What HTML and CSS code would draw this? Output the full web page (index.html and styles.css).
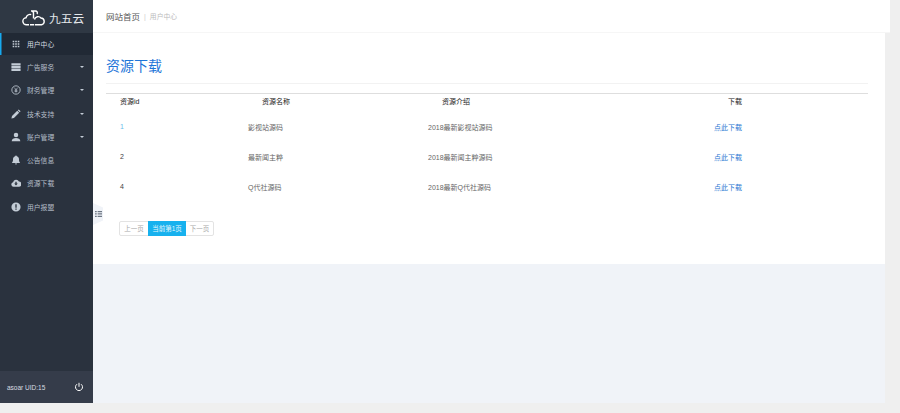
FILE: index.html
```html
<!DOCTYPE html>
<html lang="zh-CN">
<head>
<meta charset="utf-8">
<title>资源下载</title>
<link rel="stylesheet" href="styles.css">
</head>
<body>
<div class="shell">
  <aside class="sidebar">
    <div class="brand">
      <svg class="logo" viewBox="0 0 24 16" width="24" height="16"><path d="M7 14.700H4.600a3.500 3.500 0 0 1-.5-7A4 4 0 0 1 9.200 4.600M9 1h4.300a1.900 1.900 0 0 1 1.700 3M10.200 1l1.300 1.500V8.500M12 14.700H8M12.500 9.500a3.700 3.700 0 0 1 6.500-1.500 3.400 3.400 0 0 1 .6 6.700h-6.800" fill="none" stroke="#fff" stroke-width="1.400"/></svg>
      <span class="brand-name">九五云</span>
    </div>
    <nav class="menu">
      <a class="item active"><svg class="ic" viewBox="-1.500 -1.500 15 15"><path d="M1 1h2.400v2.400H1zM4.800 1h2.400v2.400H4.800zM8.600 1H11v2.400H8.600zM1 4.800h2.400v2.400H1zM4.800 4.800h2.400v2.400H4.800zM8.600 4.800H11v2.400H8.600zM1 8.600h2.400V11H1zM4.800 8.600h2.400V11H4.800zM8.600 8.600H11V11H8.600z"/></svg><span>用户中心</span></a>
      <a class="item"><svg class="ic" viewBox="0 0 12 12"><path d="M.500 1.500h11v2.700H.500zM.500 4.800h11v2.700H.500zM.500 8.100h11v2.700H.500z"/></svg><span>广告服务</span><i class="caret"></i></a>
      <a class="item"><svg class="ic" viewBox="0 0 12 12"><circle cx="6" cy="6" r="5" fill="none" stroke="#c3ccd6" stroke-width="1"/><path d="M4.200 3.200 6 6l1.800-2.800M4.300 6.300h3.400M4.300 7.700h3.400M6 6v3" fill="none" stroke="#c3ccd6" stroke-width=".8"/></svg><span>财务管理</span><i class="caret"></i></a>
      <a class="item"><svg class="ic" viewBox="0 0 12 12"><path d="M.500 11.500l.7-3 6.300-6.300 2.300 2.300-6.300 6.300zM8.200 1.500l1-1 2.300 2.300-1 1z"/></svg><span>技术支持</span><i class="caret"></i></a>
      <a class="item"><svg class="ic" viewBox="0 0 12 12"><circle cx="6" cy="3.600" r="2.700"/><path d="M.800 11c0-2.800 2.600-3.900 5.200-3.900s5.200 1.100 5.200 3.900z"/></svg><span>账户管理</span><i class="caret"></i></a>
      <a class="item"><svg class="ic" viewBox="0 0 12 12"><path d="M6 .5a1 1 0 0 1 1 1c1.800.5 2.600 2 2.600 3.800 0 2 .5 3.200 1.400 4.200H1c.9-1 1.400-2.200 1.400-4.200C2.400 3.500 3.200 2 5 1.500a1 1 0 0 1 1-1zM4.800 10.200h2.400a1.200 1.200 0 0 1-2.400 0z"/></svg><span>公告信息</span></a>
      <a class="item"><svg class="ic" viewBox="0 0 12 12"><path fill-rule="evenodd" d="M3 10.500a2.800 2.800 0 0 1-.5-5.500A3.700 3.700 0 0 1 9.500 4.300a3.100 3.100 0 0 1-.2 6.200zM6 9l2.200-2.500H6.800V4.500H5.200v2H3.800z"/></svg><span>资源下载</span></a>
      <a class="item"><svg class="ic" viewBox="0 0 12 12"><path fill-rule="evenodd" d="M6 .5a5.500 5.500 0 1 1 0 11A5.500 5.500 0 0 1 6 .5zM5.200 2.800v4.200h1.600V2.800zM5.200 7.800v1.500h1.600V7.800z"/></svg><span>用户报盟</span></a>
    </nav>
    <div class="foot">
      <span class="uid">asoar UID:15</span>
      <svg class="power" viewBox="0 0 10 10" width="10" height="10"><path d="M3 2.200a3.500 3.500 0 1 0 4 0M5 .8v4" fill="none" stroke="#fff" stroke-width="1"/></svg>
    </div>
  </aside>
  <div class="main">
    <header class="topbar">
      <a class="crumb-home">网站首页</a>
      <span class="crumb-sep">|</span>
      <span class="crumb-cur">用户中心</span>
    </header>
    <section class="panel">
      <h1 class="title">资源下载</h1>
      <table class="grid">
        <colgroup><col class="c1"><col class="c2"><col class="c3"><col class="c4"></colgroup>
        <thead>
          <tr><th class="first">资源id</th><th>资源名称</th><th>资源介绍</th><th>下载</th></tr>
        </thead>
        <tbody>
          <tr><td class="first link-light">1</td><td>影视站源码</td><td>2018最新影视站源码</td><td><a class="dl">点此下载</a></td></tr>
          <tr><td class="first">2</td><td>最新闻主粹</td><td>2018最新闻主粹源码</td><td><a class="dl">点此下载</a></td></tr>
          <tr><td class="first">4</td><td>Q代社源码</td><td>2018最新Q代社源码</td><td><a class="dl">点此下载</a></td></tr>
        </tbody>
      </table>
      <div class="pager">
        <span class="pg prev">上一页</span><span class="pg cur">当前第1页</span><span class="pg next">下一页</span>
      </div>
      <div class="toggle"><svg viewBox="0 0 8 8" width="7" height="8"><path d="M0 .5h2v1.500H0zM3 .5h5v1.500H3zM0 3.200h2v1.500H0zM3 3.200h5v1.500H3zM0 6h2v1.500H0zM3 6h5v1.500H3z" fill="#6d7784"/></svg></div>
    </section>
  </div>
</div>
</body>
</html>
```
FILE: styles.css
```css
* { box-sizing: border-box; }
html, body { margin: 0; padding: 0; }
body {
  background: #efefef;
  font-family: "Liberation Sans", "Noto Sans CJK SC", sans-serif;
  font-size: 7px;
  color: #333;
  height: 413px;
  overflow: hidden;
}
.shell { display: flex; width: 885px; height: 403px; }
.sidebar {
  width: 93px;
  flex: none;
  display: flex;
  flex-direction: column;
  background: #2a323e;
}
.brand {
  height: 33px;
  background: #2f3844;
  display: flex;
  align-items: center;
  padding: 3px 0 0 22px;
  gap: 3px;
}
.brand-name { color: #e6e9ec; font-size: 11.700px; line-height: 1; padding-top: 2px; }
.menu { flex: 1; display: flex; flex-direction: column; }
.item {
  height: 23.300px;
  display: flex;
  align-items: center;
  color: #b4bdc8;
  padding: 0 9px 0 11px;
  font-size: 6.800px;
}
.item.active {
  height: 22.300px;
  background: #212935;
  box-shadow: inset 1.500px 0 0 #17a9ef;
  color: #d6dde3;
}
.ic { width: 10px; height: 10px; fill: #c3ccd6; margin-right: 6px; flex: none; }
.item span { flex: 1; }
.caret {
  width: 0; height: 0;
  border-left: 2px solid transparent;
  border-right: 2px solid transparent;
  border-top: 2px solid #c3ccd6;
}
.foot {
  height: 32px;
  background: #353c4a;
  display: flex;
  align-items: center;
  justify-content: space-between;
  padding: 0 9px 0 7px;
  color: #d9dde2;
  font-size: 6.500px;
}
.main { flex: 1; display: flex; flex-direction: column; min-width: 0; background: #f0f3f8; }
.topbar {
  height: 33px;
  width: 797px;
  flex: none;
  background: #fff;
  border-bottom: 1px solid #f6f6f6;
  display: flex;
  align-items: center;
  padding-left: 13px;
  gap: 4px;
}
.crumb-home { font-size: 8.500px; color: #555; }
.crumb-sep { color: #ccc; font-size: 7px; }
.crumb-cur { color: #bbb; font-size: 6.800px; }
.panel {
  position: relative;
  height: 231px;
  background: #fff;
  padding: 0 17px 0 13px;
}
.title {
  margin: 0;
  padding: 24px 0 13px;
  height: 51px;
  font-size: 14px;
  line-height: 18px;
  font-weight: 400;
  color: #1e75d8;
  border-bottom: 1px solid #f2f2f2;
}
.grid {
  width: 762px;
  margin-top: 9px;
  border-collapse: collapse;
  table-layout: fixed;
  border-top: 1px solid #dedede;
}
.c1 { width: 141px; }
.c2 { width: 180px; }
.c3 { width: 286px; }
.c4 { width: 155px; }
.grid th {
  height: 18px;
  padding: 0 0 4px 15px;
  font-weight: 400;
  text-align: left;
  font-size: 7px;
  color: #222;
}
.grid td {
  height: 30px;
  padding: 0 0 0 1px;
  font-size: 7px;
  color: #666;
}
.grid th.first, .grid td.first { padding-left: 14px; }
.grid td.first { color: #444; }
.grid td.link-light { color: #6cbcea; }
.dl { color: #2a78d2; }
.pager {
  display: flex;
  margin: 19px 0 0 13px;
  width: 95px;
  height: 15px;
  border: 1px solid #e3e3e3;
  border-radius: 2px;
}
.pg {
  display: flex;
  align-items: center;
  justify-content: center;
  font-size: 6.500px;
  color: #aaa;
  white-space: nowrap;
}
.prev { width: 28px; }
.next { width: 27px; }
.pg.cur { width: 38px; background: #17b1ee; color: #e8f7fd; margin: -1px 0; }
.toggle {
  position: absolute;
  left: 0;
  top: 170px;
  width: 10px;
  height: 22px;
  background: #f0f3f8;
  clip-path: polygon(0 0, 100% 20%, 100% 80%, 0 100%);
  display: flex;
  align-items: center;
  justify-content: center;
}
```
